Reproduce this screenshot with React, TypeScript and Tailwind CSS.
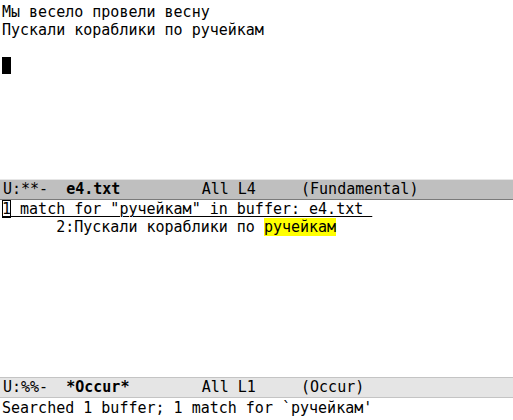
const mono = "font-['DejaVu_Sans_Mono',monospace] text-[15px] leading-[18px]";

const App = () => {
  return (
    <div className={`w-[513px] h-[420px] bg-white text-black overflow-hidden flex flex-col ${mono}`}>
      {/* upper window: e4.txt */}
      <div className="h-[179px] pt-[3px] pl-[2px] whitespace-pre">
        <div className="h-[18px]">Мы весело провели весну</div>
        <div className="h-[18px]">Пускали кораблики по ручейкам</div>
        <div className="h-[18px]"> </div>
        <div className="h-[18px] flex">
          <span className="w-[9px] h-[17px] bg-black" />
        </div>
      </div>
      <div className="h-[21px] bg-[#bfbfbf] border-t border-t-[#e6e6e6] border-b border-b-[#7a7a7a] pl-[3px] whitespace-pre">
        <span>U:**-  </span>
        <span className="font-bold">e4.txt</span>
        <span>         All L4     (Fundamental)</span>
      </div>

      {/* lower window: *Occur* */}
      <div className="h-[177px] pl-[2px] whitespace-pre">
        <div className="h-[18px] flex">
          <span className="underline decoration-1 underline-offset-[2px]">
            <span className="outline outline-1 outline-black -outline-offset-1">1</span>
            {' match for "ручейкам" in buffer: e4.txt '}
          </span>
        </div>
        <div className="h-[18px]">
          {'      2:Пускали кораблики по '}
          <span className="bg-[#ffff00]">ручейкам</span>
        </div>
      </div>
      <div className="h-[21px] bg-[#e5e5e5] border-t border-t-[#c4c4c4] border-b border-b-[#c4c4c4] pl-[3px] whitespace-pre">
        <span>U:%%-  </span>
        <span className="font-bold">*Occur*</span>
        <span>        All L1     (Occur)</span>
      </div>

      {/* echo area */}
      <div className="h-[18px] pl-[2px] whitespace-pre mt-px">
        Searched 1 buffer; 1 match for `ручейкам'
      </div>
    </div>
  );
};

export default App;
